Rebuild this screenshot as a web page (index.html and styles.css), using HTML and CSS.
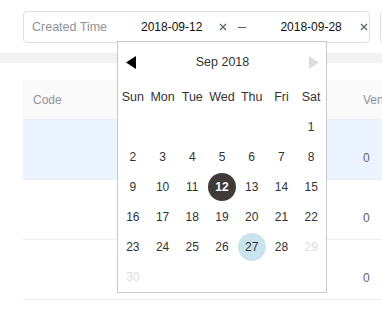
FILE: index.html
```html
<!DOCTYPE html>
<html lang="en">
<head>
    <meta charset="UTF-8">
    <title>Orders</title>
    <link rel="stylesheet" href="styles.css">
</head>
<body>
    <div class="filters">
        <div class="range">
            <span class="label">Created Time</span>
            <span class="date">2018-09-12</span>
            <span class="clear">
                <svg width="8" height="8" viewBox="0 0 8 8"><path d="M1 1L7 7M7 1L1 7" stroke="#5a6470" stroke-width="1.3"/></svg>
            </span>
            <span class="sep"></span>
            <span class="date date-end">2018-09-28</span>
            <span class="clear clear-end">
                <svg width="8" height="8" viewBox="0 0 8 8"><path d="M1 1L7 7M7 1L1 7" stroke="#5a6470" stroke-width="1.3"/></svg>
            </span>
        </div>
        <div class="range"></div>
    </div>

    <div class="band"></div>

    <div class="content">
        <table class="grid">
            <thead>
                <tr><th class="col-code">Code</th><th>Vendor</th></tr>
            </thead>
            <tbody>
                <tr class="active"><td></td><td>0</td></tr>
                <tr><td></td><td>0</td></tr>
                <tr><td></td><td>0</td></tr>
            </tbody>
        </table>
    </div>

    <div class="picker">
        <div class="picker-head">
            <span class="arrow">
                <svg width="10" height="13" viewBox="0 0 10 13"><polygon points="0,6.5 10,0 10,13" fill="#000"/></svg>
            </span>
            <span class="month">Sep 2018</span>
            <span class="arrow">
                <svg width="10" height="13" viewBox="0 0 10 13"><polygon points="10,6.5 0,0 0,13" fill="#dddddd"/></svg>
            </span>
        </div>
        <div class="days">
            <span class="wd">Sun</span><span class="wd">Mon</span><span class="wd">Tue</span><span class="wd">Wed</span><span class="wd">Thu</span><span class="wd">Fri</span><span class="wd">Sat</span>
            <span></span><span></span><span></span><span></span><span></span><span></span><span class="day">1</span>
            <span class="day">2</span><span class="day">3</span><span class="day">4</span><span class="day">5</span><span class="day">6</span><span class="day">7</span><span class="day">8</span>
            <span class="day">9</span><span class="day">10</span><span class="day">11</span><span class="day"><b class="dot selected">12</b></span><span class="day">13</span><span class="day">14</span><span class="day">15</span>
            <span class="day">16</span><span class="day">17</span><span class="day">18</span><span class="day">19</span><span class="day">20</span><span class="day">21</span><span class="day">22</span>
            <span class="day">23</span><span class="day">24</span><span class="day">25</span><span class="day">26</span><span class="day"><b class="dot hover">27</b></span><span class="day">28</span><span class="day off">29</span>
            <span class="day off">30</span>
        </div>
    </div>
</body>
</html>
```

FILE: styles.css
```css
html, body {
    margin: 0;
    width: 382px;
    height: 314px;
    overflow: hidden;
    background: #fff;
    font-family: 'Liberation Sans', Arial, sans-serif;
    font-size: 12px;
    color: #333;
}

.filters {
    display: flex;
    gap: 10px;
    height: 53px;
    box-sizing: border-box;
    padding: 11px 0 0 23px;
}

.range {
    flex: none;
    display: flex;
    align-items: center;
    width: 347px;
    height: 32px;
    box-sizing: border-box;
    padding-left: 8px;
    border: 1px solid #dcdfe6;
    border-radius: 4px;
}

.label {
    width: 109px;
    flex: none;
    color: #909399;
    font-size: 12.5px;
}

.date {
    color: #111;
}

.clear {
    display: flex;
    margin-left: 17px;
}

.clear-end {
    margin-left: 18px;
}

.sep {
    width: 8px;
    height: 1px;
    margin-left: 11px;
    background: #606266;
}

.date-end {
    margin-left: 34px;
}

.band {
    height: 10px;
    background: #f2f2f2;
}

.content {
    padding: 17px 0 0 23px;
}

.grid {
    width: 420px;
    border-collapse: collapse;
    table-layout: fixed;
}

.grid th {
    height: 39px;
    padding: 0 0 0 10px;
    text-align: left;
    font-weight: normal;
    color: #909399;
    background: #fafafa;
    border-bottom: 1px solid #ebeef5;
}

.grid .col-code {
    width: 320px;
}

.grid td {
    height: 20px;
    line-height: 20px;
    padding: 28px 0 11px 10px;
    color: #606266;
    border-bottom: 1px solid #ebeef5;
}

.grid tr.active td {
    background: #ecf5ff;
}

.picker {
    position: absolute;
    left: 117px;
    top: 41px;
    width: 210px;
    box-sizing: border-box;
    background: #fff;
    border: 1px solid #c8c8c8;
}

.picker-head {
    display: flex;
    align-items: center;
    justify-content: space-between;
    height: 40px;
    padding: 0 7px 0 8px;
}

.arrow {
    display: flex;
}

.month {
    font-size: 12.5px;
}

.days {
    display: grid;
    grid-template-columns: repeat(7, 1fr);
    grid-auto-rows: 30px;
}

.days span {
    display: flex;
    align-items: center;
    justify-content: center;
}

.wd {
    font-size: 12.5px;
}

.day.off {
    color: #dcdcdc;
}

.dot {
    display: flex;
    align-items: center;
    justify-content: center;
    width: 28px;
    height: 28px;
    border-radius: 50%;
    font-weight: normal;
}

.dot.selected {
    background: #3f3b3a;
    color: #fff;
    font-weight: bold;
}

.dot.hover {
    background: #c9e4ee;
}
```
